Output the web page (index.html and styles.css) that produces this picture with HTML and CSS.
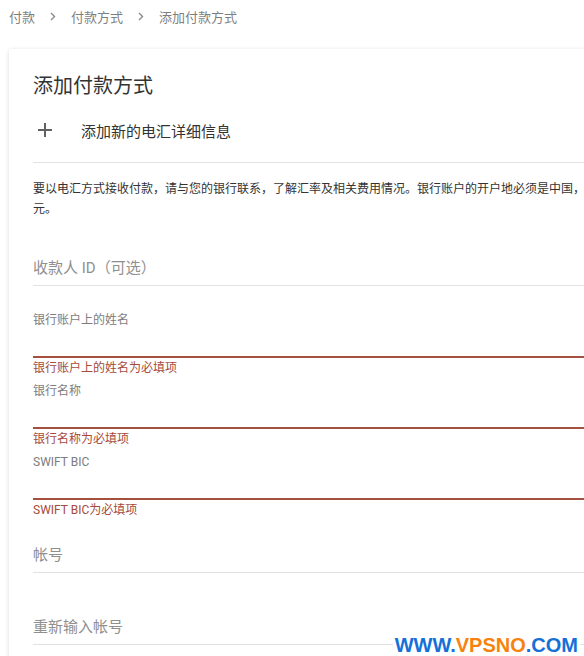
FILE: index.html
```html
<!DOCTYPE html>
<html lang="zh-CN">
<head>
    <meta charset="UTF-8">
    <meta name="viewport" content="width=device-width, initial-scale=1.0">
    <title>添加付款方式</title>
    <link rel="stylesheet" href="styles.css">
</head>
<body>
    <nav class="breadcrumb">
        <span>付款</span>
        <svg class="chev" width="6" height="9" viewBox="0 0 6 9"><path d="M1 1l3.5 3.5L1 8" fill="none" stroke="#8a8a8a" stroke-width="1.4"/></svg>
        <span>付款方式</span>
        <svg class="chev" width="6" height="9" viewBox="0 0 6 9"><path d="M1 1l3.5 3.5L1 8" fill="none" stroke="#8a8a8a" stroke-width="1.4"/></svg>
        <span>添加付款方式</span>
    </nav>

    <div class="card">
        <h1 class="title">添加付款方式</h1>

        <div class="add-row">
            <svg class="plus" width="24" height="24" viewBox="0 0 24 24"><path d="M12 5v14M5 12h14" stroke="#616161" stroke-width="2"/></svg>
            <span>添加新的电汇详细信息</span>
        </div>

        <p class="intro">要以电汇方式接收付款，请与您的银行联系，了解汇率及相关费用情况。银行账户的开户地必须是中国，并且必须能够接收美元。</p>

        <div class="field field-empty">
            <span class="placeholder">收款人 ID（可选）</span>
        </div>

        <div class="field field-error">
            <label class="label">银行账户上的姓名</label>
            <div class="input-line"></div>
            <div class="error">银行账户上的姓名为必填项</div>
        </div>

        <div class="field field-error">
            <label class="label">银行名称</label>
            <div class="input-line"></div>
            <div class="error">银行名称为必填项</div>
        </div>

        <div class="field field-error">
            <label class="label">SWIFT BIC</label>
            <div class="input-line"></div>
            <div class="error">SWIFT BIC为必填项</div>
        </div>

        <div class="field field-empty account">
            <span class="placeholder">帐号</span>
        </div>

        <div class="field field-empty account-again">
            <span class="placeholder">重新输入帐号</span>
        </div>
    </div>

    <div class="watermark">WWW.<span class="orange">VPSNO</span>.COM</div>
</body>
</html>
```

FILE: styles.css
```css
body, h1, p {
    margin: 0;
    padding: 0;
}

body {
    font-family: Roboto, "Noto Sans CJK SC", sans-serif;
    background: #fff;
    color: #333;
    width: 584px;
    height: 656px;
    overflow: hidden;
    position: relative;
}

.breadcrumb {
    display: flex;
    align-items: center;
    gap: 15px;
    height: 32px;
    padding-left: 9px;
    font-size: 13px;
    color: #7f7f7f;
}

.chev {
    margin-top: 1px;
}

.card {
    margin: 17px 0 0 9px;
    width: 666px;
    padding: 23px 24px 40px;
    background: #fff;
    box-shadow: 0 1px 4px rgba(0, 0, 0, 0.16);
    border-radius: 2px;
}

.title {
    font-size: 20px;
    font-weight: normal;
    line-height: 28px;
    color: #333;
}

.add-row {
    display: flex;
    align-items: center;
    gap: 24px;
    height: 36px;
    margin-top: 12px;
    padding-bottom: 14px;
    border-bottom: 1px solid #e2e2e2;
    font-size: 15px;
    color: #333;
}

.plus {
    display: block;
}

.intro {
    margin-top: 16px;
    font-size: 12px;
    line-height: 20px;
    color: #333;
}

.field-empty {
    margin-top: 39px;
    padding-bottom: 7px;
    border-bottom: 1px solid #e2e2e2;
}

.placeholder {
    display: block;
    font-size: 15px;
    line-height: 20px;
    color: #8f8f8f;
}

.field-error {
    margin-top: 7px;
}

.field-empty + .field-error {
    margin-top: 26px;
}

.label {
    display: block;
    font-size: 12px;
    line-height: 16px;
    color: #7d7d7d;
}

.input-line {
    height: 2px;
    margin-top: 28px;
    background: #a3503f;
}

.error {
    margin-top: 2px;
    font-size: 12px;
    line-height: 16px;
    color: #a64a3a;
}

.account {
    margin-top: 27px;
}

.account-again {
    margin-top: 44px;
}

.watermark {
    position: absolute;
    right: 4px;
    bottom: 1px;
    padding: 0 2px;
    background: #fff;
    font-family: "Liberation Sans", Arial, sans-serif;
    font-weight: bold;
    font-size: 20px;
    line-height: 20px;
    color: #1570d8;
}

.orange {
    color: #f7830c;
}
```
